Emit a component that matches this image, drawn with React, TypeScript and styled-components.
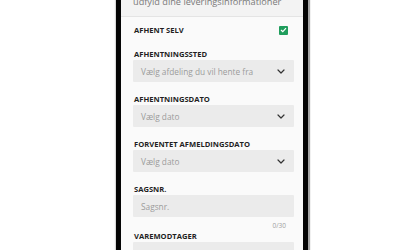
import React from "react";
import styled, { createGlobalStyle } from "styled-components";

const Global = createGlobalStyle`
  html, body { margin: 0; padding: 0; background: #ffffff; }
  body { font-family: "Open Sans", "Liberation Sans", sans-serif; }
  #root { height: 250px; overflow: hidden; }
`;

const Stage = styled.div`
  height: 250px;
  display: flex;
  justify-content: flex-start;
  padding-left: 116px;
  overflow: hidden;
`;

const Phone = styled.div`
  width: 182px;
  height: 250px;
  border-left: 5px solid #050505;
  border-right: 5px solid #050505;
  box-shadow: 2px 0 1px rgba(0, 0, 0, 0.35), -1px 0 1px rgba(0, 0, 0, 0.15);
  background: #fafafa;
  overflow: hidden;
`;

const Header = styled.div`
  height: 16px;
  background: #f3f3f3;
  border-bottom: 1px solid #e4e4e4;
  padding-left: 12px;
  overflow: hidden;
`;

const HeaderText = styled.div`
  margin-top: -4px;
  font-size: 9.2px;
  line-height: 12px;
  color: #7a7a7a;
  white-space: nowrap;
`;

const Form = styled.div`
  padding: 8px 9px 0 12px;
  display: flex;
  flex-direction: column;
`;

const CheckRow = styled.div`
  height: 10px;
  display: flex;
  align-items: center;
  justify-content: space-between;
  padding-right: 6px;
  margin-bottom: 14px;
`;

const Label = styled.div`
  font-size: 7.6px;
  line-height: 10px;
  font-weight: 700;
  color: #1f1f1f;
  text-transform: uppercase;
  white-space: nowrap;
  padding-left: 1px;
`;

const Checkbox = styled.div`
  width: 9px;
  height: 9px;
  border-radius: 1px;
  background: #1f9d5c;
  display: flex;
  align-items: center;
  justify-content: center;
`;

const Field = styled.div<{ $gap?: number }>`
  display: flex;
  flex-direction: column;
  gap: 1px;
  margin-bottom: ${(p) => (p.$gap ?? 12)}px;
`;

const Box = styled.div`
  height: 22px;
  background: #ebebeb;
  border-radius: 1px;
  display: flex;
  align-items: center;
  justify-content: space-between;
  padding: 0 9px 0 8px;
`;

const Placeholder = styled.span`
  font-size: 8.3px;
  color: #9b9b9b;
  white-space: nowrap;
`;

const Counter = styled.div`
  margin-top: 3px;
  height: 10px;
  line-height: 10px;
  font-size: 6.5px;
  color: #a0a0a0;
  text-align: right;
  padding-right: 8px;
`;

const Chevron = () => (
  <svg width="8" height="5" viewBox="0 0 8 5">
    <path d="M1 1 L4 4 L7 1" fill="none" stroke="#333" strokeWidth="1.2" strokeLinecap="round" strokeLinejoin="round" />
  </svg>
);

const Check = () => (
  <svg width="7" height="6" viewBox="0 0 7 6">
    <path d="M1 3 L2.8 4.7 L6 1.2" fill="none" stroke="#fff" strokeWidth="1.2" />
  </svg>
);

const SelectField = ({ label, placeholder }: { label: string; placeholder: string }) => (
  <Field>
    <Label>{label}</Label>
    <Box>
      <Placeholder>{placeholder}</Placeholder>
      <Chevron />
    </Box>
  </Field>
);

export default function App() {
  return (
    <>
      <Global />
      <Stage>
        <Phone>
          <Header>
            <HeaderText>udfyld dine leveringsinformationer</HeaderText>
          </Header>
          <Form>
            <CheckRow>
              <Label>Afhent selv</Label>
              <Checkbox>
                <Check />
              </Checkbox>
            </CheckRow>
            <SelectField label="Afhentningssted" placeholder="Vælg afdeling du vil hente fra" />
            <SelectField label="Afhentningsdato" placeholder="Vælg dato" />
            <SelectField label="Forventet afmeldingsdato" placeholder="Vælg dato" />
            <Field $gap={0}>
              <Label>Sagsnr.</Label>
              <Box>
                <Placeholder>Sagsnr.</Placeholder>
              </Box>
              <Counter>0/30</Counter>
            </Field>
            <Field>
              <Label>Varemodtager</Label>
              <Box>
                <Placeholder>Navn</Placeholder>
              </Box>
            </Field>
          </Form>
        </Phone>
      </Stage>
    </>
  );
}
